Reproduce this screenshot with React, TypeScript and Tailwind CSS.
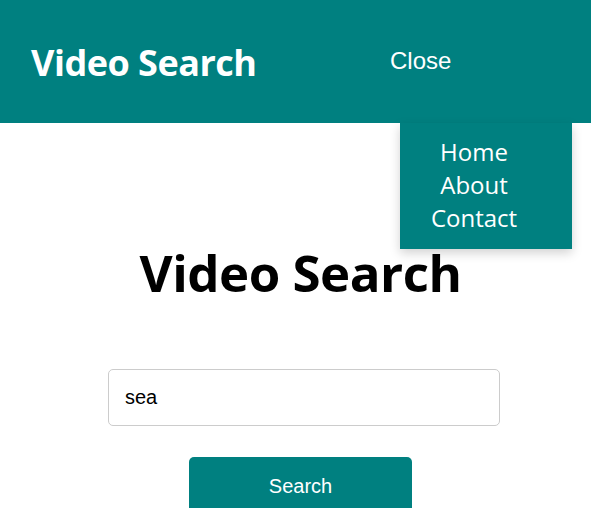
import React from 'react'

const App = () => {
  return (
    <div className="relative min-h-[508px] bg-white overflow-hidden">
      {/* Top bar */}
      <header className="h-[123px] bg-[#008080] flex items-center">
        <h2 className="ml-[31px] mt-[3px] w-[359px] text-white font-bold text-[36px] font-['Open_Sans',sans-serif] tracking-[-0.5px]">
          Video Search
        </h2>
        <button className="text-white text-[24px] font-['Liberation_Sans',Arial,sans-serif] -mt-[1px]">
          Close
        </button>
      </header>

      {/* Dropdown menu */}
      <ul className="absolute top-[123px] right-[19px] w-[172px] bg-[#008080] pt-[12px] pb-[15px] pr-6 text-center text-white text-[24px] leading-[33px] font-['Open_Sans',sans-serif] shadow-[0_4px_10px_rgba(0,0,0,0.18)]">
        <li>Home</li>
        <li>About</li>
        <li>Contact</li>
      </ul>

      {/* Main */}
      <main className="flex flex-col items-center pl-[10px] pt-[119px]">
        <h1 className="text-black font-bold text-[51px] leading-[60px] font-['Open_Sans',sans-serif] tracking-[-0.5px]">
          Video Search
        </h1>
        <input
          defaultValue="sea"
          className="mt-[67px] ml-[7px] w-[392px] h-[57px] rounded-[5px] border border-[#cccccc] px-[16px] text-[20px] text-black font-['Liberation_Sans',Arial,sans-serif] outline-none"
        />
        <button className="mt-[31px] w-[223px] h-[60px] rounded-[5px] bg-[#008080] text-white text-[20px] font-['Liberation_Sans',Arial,sans-serif] pb-[3px]">
          Search
        </button>
      </main>
    </div>
  )
}

export default App
